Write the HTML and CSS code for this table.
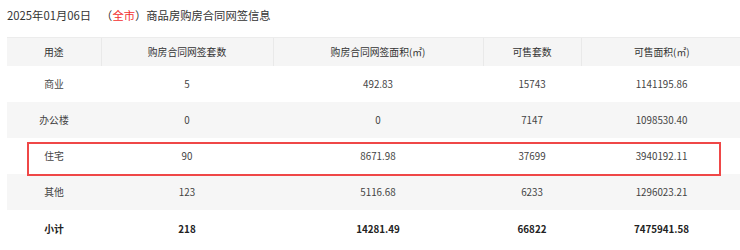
FILE: index.html
```html
<!DOCTYPE html>
<html lang="zh">
<head>
<meta charset="utf-8">
<link rel="stylesheet" href="styles.css">
</head>
<body>
<div class="page">
  <div class="title"><span class="date">2025年01月06日</span><span class="scope">（<span class="city">全市</span>）</span>商品房购房合同网签信息</div>
  <div class="wrap">
    <table class="data">
      <colgroup>
        <col class="c1"><col class="c2"><col class="c3"><col class="c4"><col class="c5">
      </colgroup>
      <thead>
        <tr><th>用途</th><th>购房合同网签套数</th><th>购房合同网签面积(㎡)</th><th>可售套数</th><th>可售面积(㎡)</th></tr>
      </thead>
      <tbody>
        <tr><td>商业</td><td>5</td><td>492.83</td><td>15743</td><td>1141195.86</td></tr>
        <tr class="alt"><td>办公楼</td><td>0</td><td>0</td><td>7147</td><td>1098530.40</td></tr>
        <tr><td>住宅</td><td>90</td><td>8671.98</td><td>37699</td><td>3940192.11</td></tr>
        <tr class="alt"><td>其他</td><td>123</td><td>5116.68</td><td>6233</td><td>1296023.21</td></tr>
        <tr class="total"><td>小计</td><td>218</td><td>14281.49</td><td>66822</td><td>7475941.58</td></tr>
      </tbody>
    </table>
    <div class="highlight"></div>
  </div>
</div>
</body>
</html>
```
FILE: styles.css
```css
html, body {
  margin: 0;
  padding: 0;
  background: #fff;
  overflow: hidden;
}
body {
  font-family: "Noto Sans CJK SC", "Noto Sans", sans-serif;
  color: #333;
}
.page {
  padding: 5px 0 0 7px;
}
.title {
  font-size: 11.3px;
  line-height: 21px;
  height: 21px;
  margin-bottom: 11px;
  color: #333;
}
.scope {
  margin-left: 10px;
}
.city {
  color: #f23030;
}
.wrap {
  position: relative;
  width: 735px;
}
.data {
  width: 735px;
  border-collapse: collapse;
  table-layout: fixed;
  font-size: 9.8px;
}
.c1 { width: 94px; }
.c2 { width: 172px; }
.c3 { width: 210px; }
.c4 { width: 98px; }
.c5 { width: 161px; }
.data th {
  height: 28px;
  background: #f5f5f5;
  border-top: 1px solid #ececec;
  border-left: 1px solid #e9e9e9;
  font-weight: normal;
  color: #333;
  padding: 0;
  text-align: center;
}
.data th:first-child {
  border-left: none;
}
.data td {
  height: 36px;
  padding: 0;
  text-align: center;
  color: #444;
}
.data tr.alt td {
  background: #f6f6f6;
}
.data tr.total td {
  font-weight: bold;
  color: #222;
  height: 37px;
}
.highlight {
  position: absolute;
  left: 20px;
  top: 105px;
  width: 690px;
  height: 30px;
  border: 2px solid #ef4747;
}
```
